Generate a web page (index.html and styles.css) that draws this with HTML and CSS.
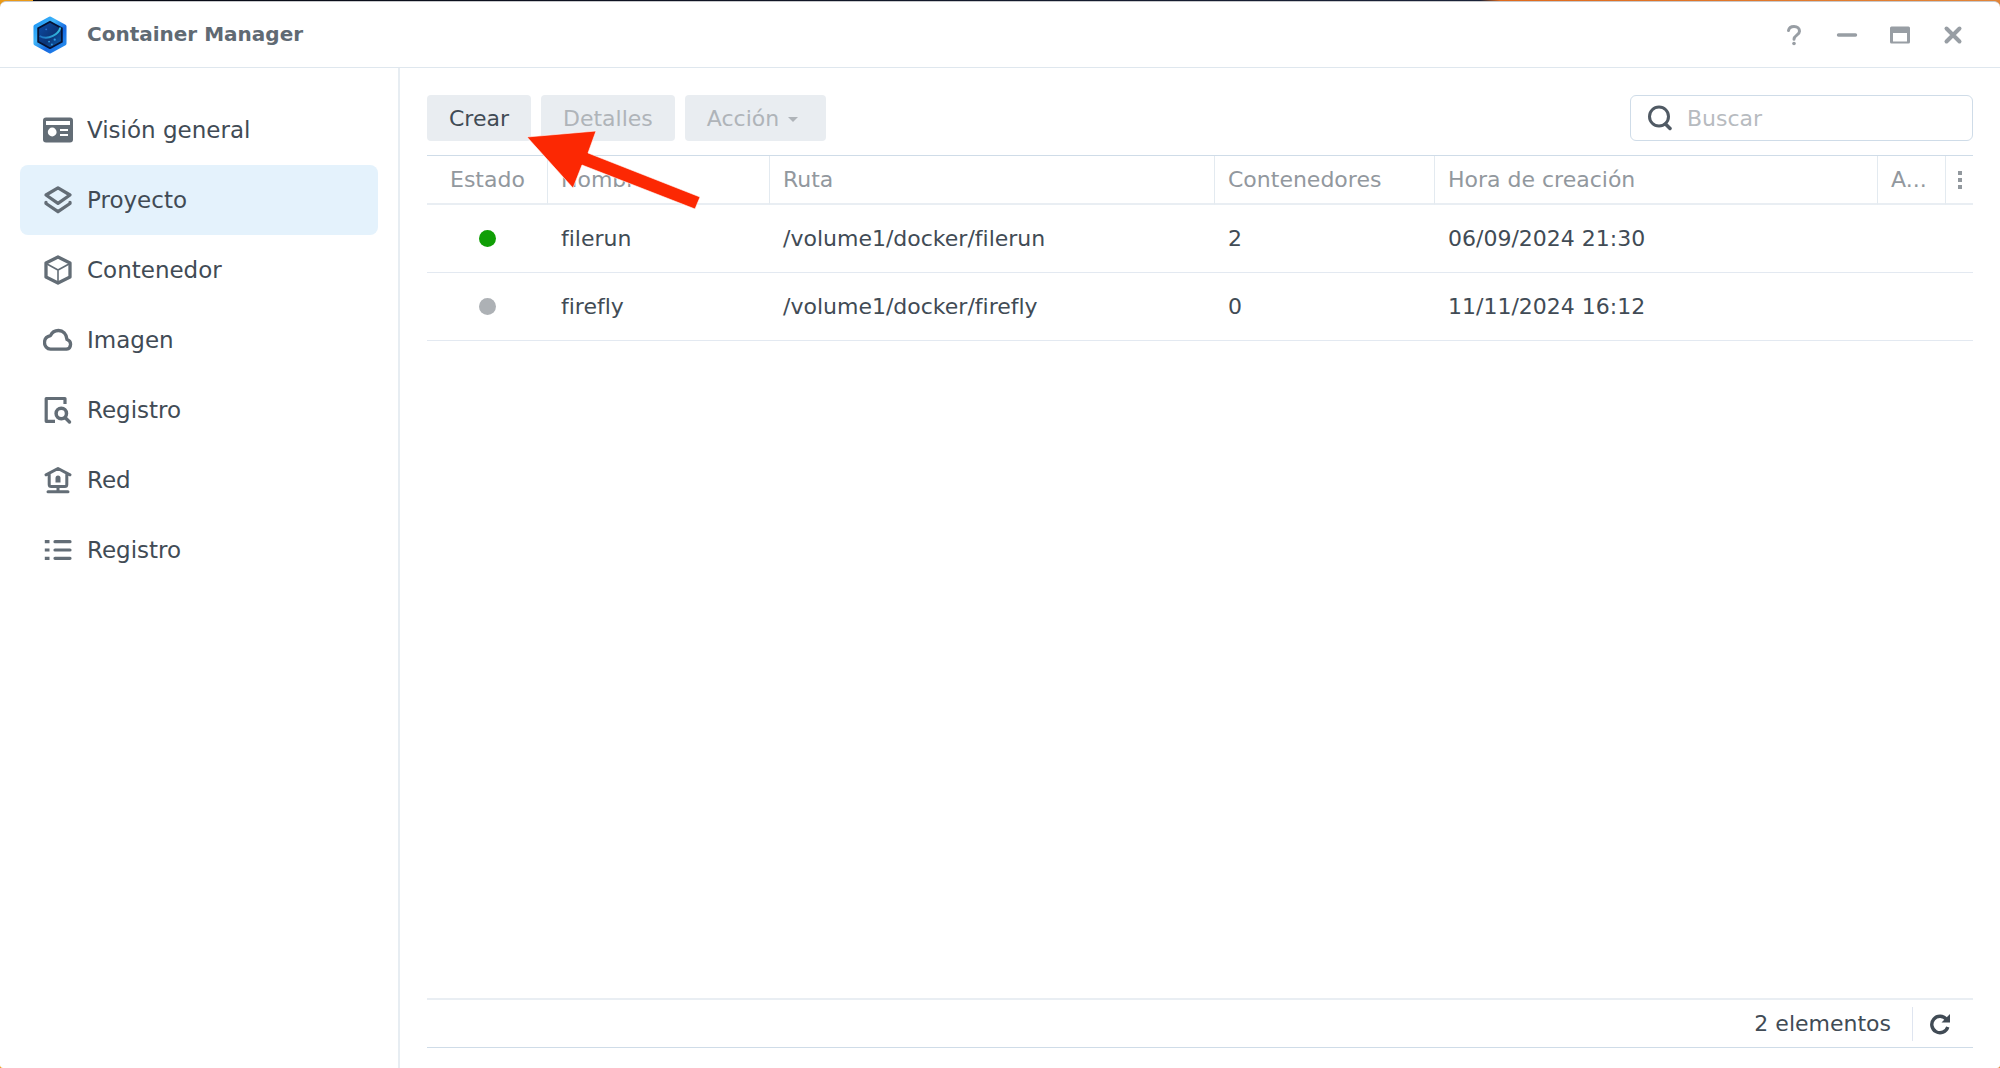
FILE: index.html
```html
<!DOCTYPE html>
<html lang="es">
<head>
<meta charset="utf-8">
<meta name="viewport" content="width=device-width, initial-scale=1">
<title>Container Manager</title>
<link rel="stylesheet" href="styles.css">
</head>
<body>
<div class="window">
  <header class="titlebar">
    <svg class="logo" viewBox="0 0 36 40" aria-hidden="true">
      <defs>
        <linearGradient id="rim" x1="0" y1="0" x2="1" y2="1">
          <stop offset="0" stop-color="#1791f5"/><stop offset=".35" stop-color="#3fb4f8"/><stop offset=".65" stop-color="#1668e0"/><stop offset="1" stop-color="#2a95f0"/>
        </linearGradient>
        <linearGradient id="core" x1="0" y1="0" x2="1" y2="1">
          <stop offset="0" stop-color="#0c4da6"/><stop offset=".55" stop-color="#0b3578"/><stop offset="1" stop-color="#0d63b4"/>
        </linearGradient>
        <linearGradient id="arc" x1="0" y1="0" x2="1" y2="0">
          <stop offset="0" stop-color="#1b6fc0"/><stop offset="1" stop-color="#35bfe0"/>
        </linearGradient>
      </defs>
      <path d="M18 2.500 33.500 11v18L18 37.500 2.500 29V11z" fill="#061233" stroke="url(#rim)" stroke-width="4" stroke-linejoin="round"/>
      <path d="M18 7 29.500 13.300v13.400L18 33 6.500 26.700V13.300z" fill="url(#core)"/>
      <path d="M7 21c5 3 10 2 14 0s7-5 8-9" fill="none" stroke="url(#arc)" stroke-width="2"/>
      <circle cx="14" cy="14" r="1" fill="#2b6fd0"/><circle cx="17" cy="27" r="1" fill="#2f9be0"/><circle cx="23" cy="25" r="1.200" fill="#2f9be0"/><circle cx="20" cy="30" r="1" fill="#2f9be0"/>
    </svg>
    <h1 class="title">Container Manager</h1>
    <div class="controls">
      <button class="control" aria-label="Ayuda"><svg viewBox="0 0 24 24"><path d="M6.500 7.500C7 5 9 3.500 12 3.500c3.500 0 5.500 2 5.500 4.700 0 3.800-5.500 4-5.500 8" fill="none" stroke="currentColor" stroke-width="3" stroke-linecap="round"/><circle cx="12" cy="20.500" r="1.800" fill="currentColor"/></svg></button>
      <button class="control" aria-label="Minimizar"><svg viewBox="0 0 24 24"><path d="M3.500 12h17" stroke="currentColor" stroke-width="3.400" stroke-linecap="round"/></svg></button>
      <button class="control" aria-label="Maximizar"><svg viewBox="0 0 24 24"><path fill-rule="evenodd" fill="currentColor" d="M3.500 3.500h17q1.500 0 1.500 1.500v14q0 1.500-1.500 1.500h-17Q2 20.500 2 19V5q0-1.500 1.500-1.500zM5 10v8.500h14V10z"/></svg></button>
      <button class="control" aria-label="Cerrar"><svg viewBox="0 0 24 24"><path d="m5.500 5.500 13 13M18.500 5.500l-13 13" stroke="currentColor" stroke-width="4" stroke-linecap="round"/></svg></button>
    </div>
  </header>

  <div class="body">
    <nav class="sidebar">
      <a class="nav-item" href="#general"><svg viewBox="0 0 30 30"><rect y="2.500" width="30" height="25" rx="3" fill="currentColor"/><path d="M3 6h24v4H3z" fill="#fff"/><circle cx="9.200" cy="17" r="4.400" fill="#fff"/><path d="M17 15h8M17 20h8" stroke="#fff" stroke-width="2"/></svg>Visión general</a>
      <a class="nav-item active" href="#proyecto" aria-current="page"><svg viewBox="0 0 30 30"><path d="M15 2.800 27 10 15 18.300 3 10zM3 17.300v1.200L15 26.700l12-8.200v-1.200" fill="none" stroke="currentColor" stroke-width="3.300" stroke-linejoin="round" stroke-linecap="round"/></svg>Proyecto</a>
      <a class="nav-item" href="#contenedor"><svg viewBox="0 0 30 30"><path d="M15 2 27 8v14l-12 6L3 22V8z" fill="none" stroke="currentColor" stroke-width="3.300" stroke-linejoin="round"/><path d="m4 9 11 6 11-6M15 15v12" fill="none" stroke="currentColor" stroke-width="1.600"/></svg>Contenedor</a>
      <a class="nav-item" href="#imagen"><svg viewBox="0 0 30 30"><path d="M7.500 24.200h16A5 5 0 0 0 24 14.500C23.500 9 20 5.500 15.500 5.500c-3.800 0-6.500 1.800-8 5.200-3.500.8-6 3.200-6 6.800s2.500 6.700 6 6.700z" fill="none" stroke="currentColor" stroke-width="3.300" stroke-linejoin="round"/></svg>Imagen</a>
      <a class="nav-item" href="#registro-imagenes"><svg viewBox="0 0 30 30"><path d="M22 9V3.500H3.200v22.800H12" fill="none" stroke="currentColor" stroke-width="3.200" stroke-linejoin="round"/><circle cx="18.300" cy="18.500" r="5.200" fill="none" stroke="currentColor" stroke-width="3.500"/><path d="m22.500 23 4 4" stroke="currentColor" stroke-width="3.400" stroke-linecap="round"/></svg>Registro</a>
      <a class="nav-item" href="#red"><svg viewBox="0 0 30 30"><path d="M3 9.800 15 3.500l12 6.300M6.200 9v10.500q0 2 2 2h13.600q2 0 2-2V9M15 22v4M5 26.700h20" fill="none" stroke="currentColor" stroke-width="3" stroke-linecap="round" stroke-linejoin="round"/><path d="M12.500 17.500V13a2.500 2.500 0 0 1 5 0v4.500z" fill="currentColor"/></svg>Red</a>
      <a class="nav-item" href="#registro"><svg viewBox="0 0 30 30"><path d="M1.800 6.700h4.700M1.800 15h4.700M1.800 23.300h4.700" stroke="currentColor" stroke-width="3.200"/><path d="M12 6.700h15M12 15h15M12 23.300h15" stroke="currentColor" stroke-width="3.200" stroke-linecap="round"/></svg>Registro</a>
    </nav>

    <main class="content">
      <div class="toolbar">
        <button class="button">Crear</button>
        <button class="button" disabled>Detalles</button>
        <button class="button has-menu" disabled>Acción<span class="caret"></span></button>
        <label class="search">
          <svg viewBox="0 0 24 26" aria-hidden="true"><circle cx="11" cy="11.500" r="9.500" fill="none" stroke="currentColor" stroke-width="3"/><path d="m17.500 19 4.500 4.500" stroke="currentColor" stroke-width="3.500" stroke-linecap="round"/></svg>
          <input type="search" placeholder="Buscar" aria-label="Buscar">
        </label>
      </div>

      <div class="grid">
        <table class="projects">
          <colgroup><col class="col-status"><col class="col-name"><col class="col-path"><col class="col-count"><col class="col-date"><col class="col-update"><col class="col-menu"></colgroup>
          <thead>
            <tr>
              <th>Estado</th><th>Nombre</th><th>Ruta</th><th>Contenedores</th><th>Hora de creación</th><th>A...</th>
              <th class="menu-cell"><button class="columns" aria-label="Columnas"><svg viewBox="0 0 4 18"><path d="M0 0h4v4H0zM0 7h4v4H0zM0 14h4v4H0z" fill="currentColor"/></svg></button></th>
            </tr>
          </thead>
          <tbody>
            <tr><td class="status"><span class="dot running"></span></td><td>filerun</td><td>/volume1/docker/filerun</td><td>2</td><td>06/09/2024 21:30</td><td></td><td></td></tr>
            <tr><td class="status"><span class="dot"></span></td><td>firefly</td><td>/volume1/docker/firefly</td><td>0</td><td>11/11/2024 16:12</td><td></td><td></td></tr>
          </tbody>
        </table>
      </div>

      <footer class="statusbar">
        <span>2 elementos</span>
        <button class="refresh" aria-label="Actualizar"><svg viewBox="0 0 22 22"><path d="M17.500 6.500A8.200 8.200 0 1 0 18.800 14" fill="none" stroke="currentColor" stroke-width="3.400"/><path d="M21 1v8.500h-8.500z" fill="currentColor"/></svg></button>
      </footer>

      <svg class="pointer" viewBox="0 0 176 82" aria-hidden="true"><path d="m2 8 69-6-8 22 112 44-5 12L57 36l-9 23z" fill="#fc2803" stroke="#fff" stroke-width="1" stroke-opacity=".6"/></svg>
    </main>
  </div>
</div>
</body>
</html>
```
FILE: styles.css
```css
* {
  box-sizing: border-box;
}

body {
  margin: 0;
  min-height: 100vh;
  display: flex;
  padding-top: 1px;
  background: linear-gradient(90deg, #eb9a16 33px, #060812 33px, #1a2238 74%, #e06a1c 75%, #e28538 100%);
  color: #414b55;
  font: 22px/28px Verdana, "DejaVu Sans", sans-serif;
}

svg {
  display: block;
  flex: none;
}

button {
  font: inherit;
  color: inherit;
  border: 0;
  padding: 0;
  background: none;
}

.window {
  flex: 1;
  display: flex;
  flex-direction: column;
  background: #fff;
  border-top: 1px solid #c8c9cc;
  border-radius: 6px 6px 3px 3px;
}

.titlebar {
  display: flex;
  align-items: center;
  height: 66px;
  padding: 0 35px 0 33px;
  border-bottom: 1px solid #dfe7ee;
}

.logo {
  width: 34px;
  height: 38px;
}

.title {
  flex: 1;
  margin: 0 0 2px 20px;
  color: #606a73;
  font-size: 20px;
  line-height: 28px;
}

.controls {
  display: flex;
  gap: 29px;
  color: #989ea4;
}

.control svg {
  width: 24px;
  height: 24px;
}

.body {
  flex: 1;
  display: flex;
}

.sidebar {
  flex: none;
  width: 400px;
  padding: 27px 20px 20px;
  border-right: 2px solid #e7edf2;
}

.nav-item {
  display: flex;
  align-items: center;
  gap: 14px;
  height: 70px;
  padding: 0 23px;
  border-radius: 8px;
  color: #414b55;
  font-size: 23px;
  text-decoration: none;
}

.nav-item.active {
  background: #e4f2fc;
}

.nav-item svg {
  width: 30px;
  height: 30px;
  color: #636d76;
}

.content {
  position: relative;
  flex: 1;
  min-width: 0;
  display: flex;
  flex-direction: column;
  padding: 27px 27px 20px;
}

.toolbar {
  display: flex;
  gap: 10px;
  margin-bottom: 14px;
}

.button {
  height: 46px;
  padding: 2px 22px 0;
  border-radius: 4px;
  background: #e9edf1;
}

.button:disabled {
  color: #afb4b9;
}

.has-menu {
  display: flex;
  align-items: center;
  gap: 9px;
  padding-right: 28px;
}

.caret {
  border: 5px solid transparent;
  border-top-color: currentColor;
  border-bottom: 0;
}

.search {
  display: flex;
  align-items: center;
  gap: 15px;
  width: 343px;
  height: 46px;
  margin-left: auto;
  padding: 0 17px;
  border: 1px solid #cfdce8;
  border-radius: 6px;
}

.search svg {
  width: 24px;
  height: 26px;
  color: #505a64;
}

.search input {
  flex: 1;
  min-width: 0;
  padding: 2px 0 0;
  border: 0;
  outline: 0;
  background: none;
  font: inherit;
  color: inherit;
}

.search input::placeholder {
  color: #b7bbc0;
}

.grid {
  flex: 1;
  border-top: 1px solid #cfdce8;
}

.projects {
  width: 100%;
  table-layout: fixed;
  border-collapse: separate;
  border-spacing: 0;
}

.col-status { width: 121px; }
.col-name { width: 222px; }
.col-path { width: 445px; }
.col-count { width: 220px; }
.col-update { width: 68px; }
.col-menu { width: 27px; }

.projects th,
.projects td {
  padding: 1px 0 0 13px;
  text-align: left;
  white-space: nowrap;
}

.projects th {
  height: 49px;
  border-right: 1px solid #e3eaf0;
  border-bottom: 2px solid #e9eef3;
  color: #92989e;
  font-weight: 400;
}

.projects th:first-child {
  padding-left: 23px;
}

.projects td {
  height: 68px;
  border-bottom: 1px solid #e3e9f1;
}

.projects .status {
  padding: 0;
}

.projects .menu-cell {
  padding: 0;
  border-right: 0;
}

.columns {
  display: block;
  margin: 0 auto;
}

.columns svg {
  width: 4px;
  height: 18px;
}

.dot {
  display: block;
  width: 17px;
  height: 17px;
  margin: 0 auto;
  border-radius: 50%;
  background: #adb1b5;
}

.dot.running {
  background: #109e06;
}

.statusbar {
  display: flex;
  align-items: center;
  justify-content: flex-end;
  gap: 21px;
  height: 50px;
  border-top: 2px solid #e9eef3;
  border-bottom: 1px solid #cfdce8;
}

.refresh {
  height: 34px;
  padding: 0 22px 0 16px;
  border-left: 1px solid #dfe5f0;
}

.refresh svg {
  width: 22px;
  height: 22px;
}

.pointer {
  position: absolute;
  left: 125px;
  top: 61px;
  width: 176px;
  height: 82px;
}
```
